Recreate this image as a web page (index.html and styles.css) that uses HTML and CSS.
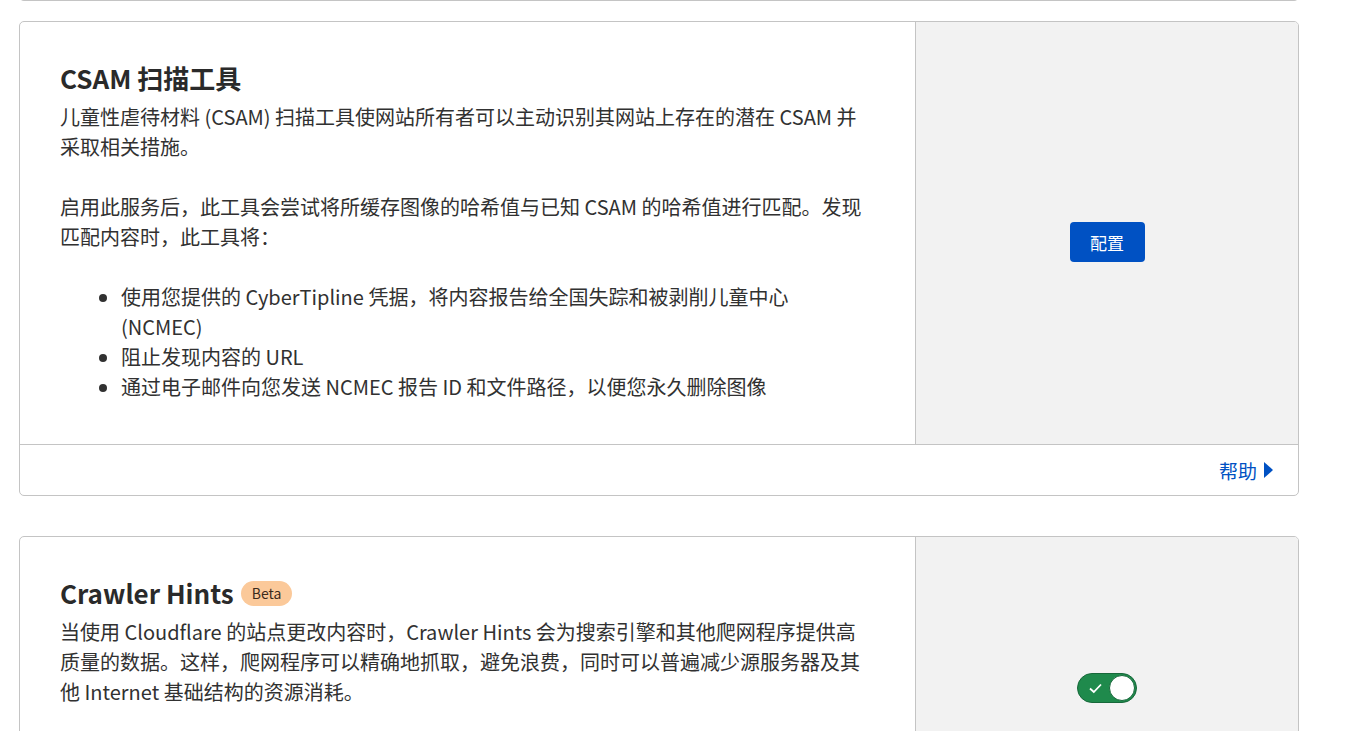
FILE: index.html
```html
<!DOCTYPE html>
<html lang="zh-CN">
  <head>
    <meta charset="utf-8">
    <link rel="stylesheet" href="styles.css">
  </head>
  <body>
    <div class="page">
      <div class="card card-prev"></div>

      <section class="card">
        <div class="card-row">
          <div class="card-main">
            <h2 class="card-title">CSAM 扫描工具</h2>
            <p>儿童性虐待材料 (CSAM) 扫描工具使网站所有者可以主动识别其网站上存在的潜在 CSAM 并采取相关措施。</p>
            <p>启用此服务后，此工具会尝试将所缓存图像的哈希值与已知 CSAM 的哈希值进行匹配。发现匹配内容时，此工具将：</p>
            <ul class="card-list">
              <li>使用您提供的 CyberTipline 凭据，将内容报告给全国失踪和被剥削儿童中心 (NCMEC)</li>
              <li>阻止发现内容的 URL</li>
              <li>通过电子邮件向您发送 NCMEC 报告 ID 和文件路径，以便您永久删除图像</li>
            </ul>
          </div>
          <div class="card-side">
            <button class="btn-primary" type="button">配置</button>
          </div>
        </div>
        <div class="card-foot">
          <a class="help-link" href="#">帮助<svg class="caret" width="9" height="16" viewBox="0 0 9 16"><path d="M0 0 L9 8 L0 16 Z" fill="currentColor"/></svg></a>
        </div>
      </section>

      <section class="card">
        <div class="card-row card-row-tall">
          <div class="card-main">
            <h2 class="card-title">Crawler Hints <span class="badge">Beta</span></h2>
            <p>当使用 Cloudflare 的站点更改内容时，Crawler Hints 会为搜索引擎和其他爬网程序提供高质量的数据。这样，爬网程序可以精确地抓取，避免浪费，同时可以普遍减少源服务器及其他 Internet 基础结构的资源消耗。</p>
          </div>
          <div class="card-side">
            <label class="toggle">
              <input type="checkbox" checked>
              <span class="toggle-track">
                <svg class="toggle-check" width="15" height="14" viewBox="0 0 15 14"><path d="M2 7.5 L5.8 11 L13 3.5" fill="none" stroke="#fff" stroke-width="1.8"/></svg>
                <span class="toggle-knob"></span>
              </span>
            </label>
          </div>
        </div>
      </section>
    </div>
  </body>
</html>
```

FILE: styles.css
```css
body {
  margin: 0;
  background-color: #fff;
  color: #313131;
  font-family: "Noto Sans CJK SC", sans-serif;
  overflow: hidden;
}

.page {
  width: 1280px;
  padding-left: 19px;
}

.card {
  border: 1px solid #c4c4c4;
  border-radius: 5px;
  background-color: #fff;
  margin-top: 40px;
  overflow: hidden;
}

/* bottom edge of the card above, scrolled almost out of view */
.card-prev {
  height: 6px;
  margin-top: -6px;
  border-top: none;
  border-radius: 0 0 5px 5px;
}

.card-prev + .card {
  margin-top: 20px;
}

.card-row {
  display: flex;
}

.card-row-tall {
  min-height: 284px;
}

.card-main {
  width: 814px;
  padding: 38px 41px 42px 40px;
  font-size: 20px;
  line-height: 30px;
}

.card-title {
  margin: 0 0 6px;
  font-size: 26px;
  line-height: 36px;
  font-weight: 700;
  color: #2a2a2a;
  display: flex;
  align-items: center;
  gap: 7px;
}

.card-main p {
  margin: 0 0 30px;
}

.card-main p:last-child {
  margin-bottom: 0;
}

.card-list {
  margin: 0;
  padding-left: 61px;
}

.card-side {
  flex-grow: 1;
  background-color: #f2f2f2;
  border-left: 1px solid #c4c4c4;
  display: flex;
  align-items: center;
  justify-content: center;
  padding-top: 18px;
}

.btn-primary {
  background-color: #0051c3;
  color: #fff;
  border: none;
  border-radius: 4px;
  font-family: inherit;
  font-size: 17px;
  width: 75px;
  height: 40px;
  cursor: pointer;
}

.card-foot {
  border-top: 1px solid #c4c4c4;
  height: 50px;
  display: flex;
  align-items: center;
  justify-content: flex-end;
  padding-right: 25px;
}

.help-link {
  color: #0051c3;
  text-decoration: none;
  font-size: 19px;
  display: flex;
  align-items: center;
  gap: 7px;
}

.badge {
  background-color: #fbc99a;
  color: #3b2a1c;
  font-size: 14px;
  font-weight: 400;
  line-height: 25px;
  padding: 0 11px;
  border-radius: 13px;
}

.toggle input {
  display: none;
}

.toggle-track {
  width: 60px;
  height: 30px;
  box-sizing: border-box;
  border-radius: 15px;
  background-color: #1f8a4c;
  border: 1px solid #17683a;
  display: flex;
  align-items: center;
  justify-content: space-between;
  padding: 0 1px 0 10px;
  cursor: pointer;
}

.toggle-knob {
  width: 26px;
  height: 26px;
  box-sizing: border-box;
  border-radius: 50%;
  background-color: #fff;
  border: 1px solid #17683a;
}
```
